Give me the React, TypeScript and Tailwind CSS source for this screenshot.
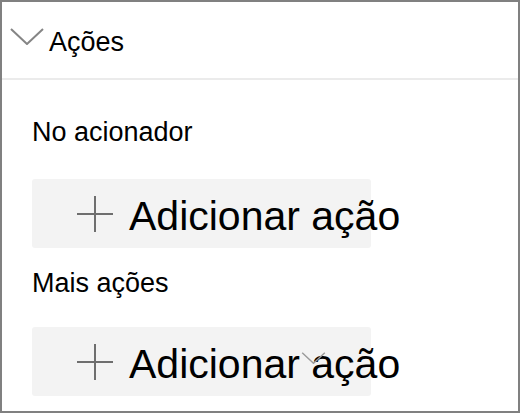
function ChevronDown({ className }: { className?: string }) {
  return (
    <svg viewBox="0 0 34 17" className={className} fill="none">
      <path d="M1 1 L17 16 L33 1" stroke="currentColor" strokeWidth="2" />
    </svg>
  );
}

function PlusIcon({ className }: { className?: string }) {
  return (
    <svg viewBox="0 0 36 36" className={className} fill="none">
      <path d="M18 0 V36 M0 18 H36" stroke="currentColor" strokeWidth="2" />
    </svg>
  );
}

function AddButton({ withChevron }: { withChevron?: boolean }) {
  return (
    <button className="relative flex h-[69px] w-[339px] items-center rounded-[3px] bg-[#f3f3f3] pl-[45px] text-black">
      <PlusIcon className="h-[36px] w-[36px] shrink-0 text-[#6e6e6e]" />
      <span className="ml-[16px] whitespace-nowrap pt-[6px] text-[41px] leading-none">
        Adicionar ação
      </span>
      {withChevron && (
        <ChevronDown className="absolute left-[268px] top-[25px] h-[12px] w-[27px] text-[#9a9a9a]" />
      )}
    </button>
  );
}

export default function App() {
  return (
    <div className="h-[413px] w-[520px] overflow-hidden border-2 border-[#808080] bg-white font-['Liberation_Sans',Arial,sans-serif] text-black">
      {/* Header */}
      <header className="flex h-[78px] items-start border-b-2 border-[#ebebeb] pl-[8px] pt-[26px]">
        <ChevronDown className="h-[17px] w-[34px] text-[#858585]" />
        <h2 className="ml-[5px] mt-[1px] text-[27px] leading-none">Ações</h2>
      </header>

      <div className="flex flex-col items-start pl-[30px]">
        <p className="mt-[39px] text-[27px] leading-none">No acionador</p>
        <div className="mt-[33px]">
          <AddButton />
        </div>
        <p className="mt-[22px] text-[27px] leading-none">Mais ações</p>
        <div className="mt-[30px]">
          <AddButton withChevron />
        </div>
      </div>
    </div>
  );
}
